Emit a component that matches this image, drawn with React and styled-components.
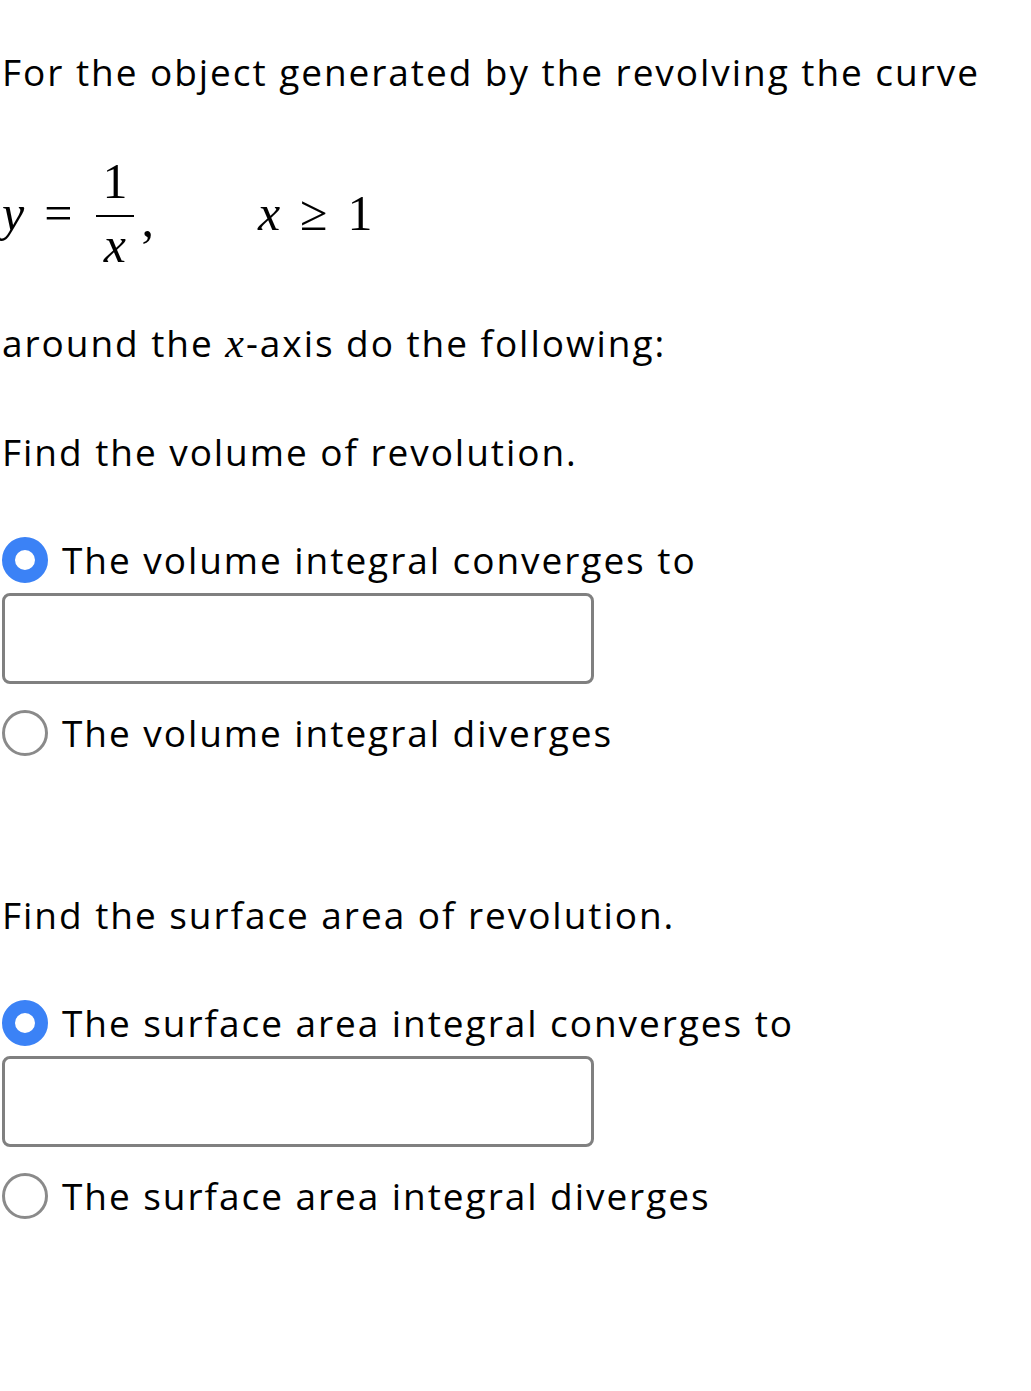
import React from "react";
import styled, { createGlobalStyle } from "styled-components";

const GlobalStyle = createGlobalStyle`
  body {
    margin: 0;
    background: #ffffff;
    font-family: "Open Sans", "Lato", sans-serif;
    color: #000000;
  }
`;

const Page = styled.div`
  padding: 48px 0 0 2px;
  width: 1029px;
  min-height: 1343px;
`;

const Para = styled.p`
  margin: 0;
  font-size: 37px;
  line-height: 48px;
  letter-spacing: 1.95px;
  white-space: nowrap;
  margin-top: ${(p) => p.$top || 0}px;
`;

const MathRow = styled.div`
  display: flex;
  align-items: center;
  height: 120px;
  margin-top: 57px;
  font-family: "Liberation Serif", "DejaVu Serif", serif;
  font-size: 50px;
`;

const MathVar = styled.span`
  font-style: italic;
`;

const Rel = styled.span`
  margin: 0 ${(p) => p.$gap || 14}px;
`;

const Fraction = styled.span`
  display: inline-flex;
  flex-direction: column;
  align-items: center;
  margin: 0 2px;
`;

const Numer = styled.span`
  line-height: 44px;
  padding: 0 8px 12px;
`;

const Denom = styled.span`
  line-height: 44px;
  padding: 6px 8px 0;
  border-top: 2px solid #000;
  font-style: italic;
`;

const Comma = styled.span`
  margin-top: 12px;
  margin-left: 4px;
`;

const Spacer = styled.span`
  width: ${(p) => p.$w}px;
`;

const InlineMath = styled.span`
  font-family: "Liberation Serif", "DejaVu Serif", serif;
  font-style: italic;
  font-size: 42px;
  letter-spacing: 0;
  margin-right: 2px;
`;

const Option = styled.label`
  display: flex;
  align-items: center;
  gap: 14px;
  font-size: 37px;
  line-height: 48px;
  letter-spacing: 1.95px;
  white-space: nowrap;
  margin-top: ${(p) => p.$top || 0}px;
`;

const Radio = styled.span`
  box-sizing: border-box;
  width: 46px;
  height: 46px;
  border-radius: 50%;
  flex: none;
  border: ${(p) => (p.$checked ? "13px solid #3b82f6" : "3.5px solid #8a8a8a")};
  background: #fff;
`;

const AnswerBox = styled.div`
  box-sizing: border-box;
  width: 592px;
  height: 91px;
  border: 3px solid #808080;
  border-radius: 8px;
  margin: 9px 0 25px;
`;

export default function App() {
  return (
    <>
      <GlobalStyle />
      <Page>
        <Para>For the object generated by the revolving the curve</Para>
        <MathRow>
          <MathVar>y</MathVar>
          <Rel $gap={20}>=</Rel>
          <Fraction>
            <Numer>1</Numer>
            <Denom>x</Denom>
          </Fraction>
          <Comma>,</Comma>
          <Spacer $w={104} />
          <MathVar>x</MathVar>
          <Rel $gap={20}>≥</Rel>
          <span>1</span>
        </MathRow>
        <Para $top={46}>
          around the <InlineMath>x</InlineMath>-axis do the following:
        </Para>
        <Para $top={61}>Find the volume of revolution.</Para>
        <Option $top={60}>
          <Radio $checked />
          The volume integral converges to
        </Option>
        <AnswerBox />
        <Option>
          <Radio />
          The volume integral diverges
        </Option>
        <Para $top={134}>Find the surface area of revolution.</Para>
        <Option $top={60}>
          <Radio $checked />
          The surface area integral converges to
        </Option>
        <AnswerBox />
        <Option>
          <Radio />
          The surface area integral diverges
        </Option>
      </Page>
    </>
  );
}
